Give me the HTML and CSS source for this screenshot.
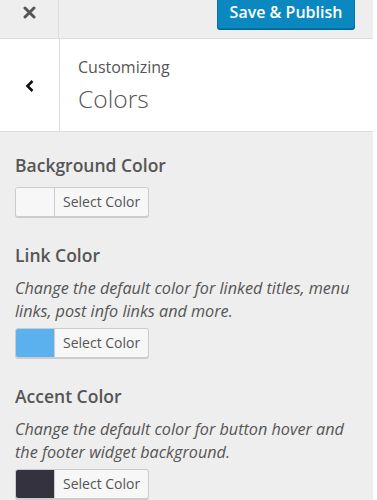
FILE: index.html
```html
<!DOCTYPE html>
<html lang="en">
<head>
    <meta charset="UTF-8">
    <meta name="viewport" content="width=device-width, initial-scale=1.0">
    <title>Customizing Colors</title>
    <link rel="stylesheet" href="styles.css">
</head>
<body>
    <div class="customizer">
        <div class="topbar">
            <div class="close-btn">
                <svg width="13" height="13" viewBox="0 0 13 13"><path d="M2 2 L11 11 M11 2 L2 11" stroke="#555" stroke-width="3" stroke-linecap="round"/></svg>
            </div>
            <button class="publish-btn">Save &amp; Publish</button>
        </div>

        <div class="section-header">
            <div class="back-btn">
                <svg width="10" height="14" viewBox="0 0 10 14"><path d="M7.5 2 L2.5 7 L7.5 12" fill="none" stroke="#111" stroke-width="2.6"/></svg>
            </div>
            <div class="section-title">
                <span class="crumb">Customizing</span>
                <h2>Colors</h2>
            </div>
        </div>

        <div class="controls">
            <div class="control">
                <h3>Background Color</h3>
                <div class="color-picker">
                    <span class="swatch swatch-light"></span>
                    <span class="picker-label">Select Color</span>
                </div>
            </div>

            <div class="control">
                <h3>Link Color</h3>
                <p class="description">Change the default color for linked titles, menu links, post info links and more.</p>
                <div class="color-picker">
                    <span class="swatch swatch-blue"></span>
                    <span class="picker-label">Select Color</span>
                </div>
            </div>

            <div class="control">
                <h3>Accent Color</h3>
                <p class="description">Change the default color for button hover and the footer widget background.</p>
                <div class="color-picker">
                    <span class="swatch swatch-dark"></span>
                    <span class="picker-label">Select Color</span>
                </div>
            </div>
        </div>
    </div>
</body>
</html>
```

FILE: styles.css
```css
body {
    font-family: 'Open Sans', 'Noto Sans', sans-serif;
    background: #fff;
    margin: 0;
    padding: 0;
    color: #555;
}

.customizer {
    width: 373px;
    height: 500px;
    overflow: hidden;
    background: #eee;
}

.topbar {
    display: flex;
    align-items: flex-start;
    height: 38px;
    background: #eee;
    border-bottom: 1px solid #ddd;
}

.close-btn {
    width: 59px;
    height: 38px;
    border-right: 1px solid #ddd;
    display: flex;
    justify-content: center;
    padding-top: 6px;
    box-sizing: border-box;
}

.publish-btn {
    margin-left: auto;
    margin-right: 18px;
    margin-top: -5px;
    width: 138px;
    height: 34px;
    padding: 0;
    background: #0a88bf;
    border: 1px solid #0073aa;
    border-radius: 3px;
    box-shadow: 0 1px 0 #006799;
    color: #fff;
    font-family: 'Open Sans', sans-serif;
    font-size: 16px;
    font-weight: 600;
}

.section-header {
    display: flex;
    height: 92px;
    background: #fff;
    border-bottom: 1px solid #ddd;
}

.back-btn {
    width: 59px;
    border-right: 1px solid #ddd;
    display: flex;
    align-items: center;
    justify-content: center;
    padding-top: 2px;
}

.section-title {
    padding: 17px 0 0 18px;
}

.crumb {
    display: block;
    font-size: 16px;
    line-height: 22px;
}

.section-title h2 {
    margin: 6px 0 0;
    font-size: 24.6px;
    font-weight: 300;
    line-height: 30px;
}

.controls {
    padding: 21px 15px 0;
}

.control {
    margin-bottom: 26px;
}

.control h3 {
    margin: 0 0 10px;
    font-size: 17.5px;
    font-weight: 600;
    line-height: 24px;
}

.description {
    margin: 0 0 5px;
    font-size: 16.2px;
    font-style: italic;
    line-height: 23px;
}

.color-picker {
    display: flex;
    width: max-content;
    height: 30px;
    background: #f7f7f7;
    border: 1px solid #ccc;
    border-radius: 3px;
    box-shadow: 0 1px 0 #ccc;
    box-sizing: border-box;
    overflow: hidden;
}

.swatch {
    width: 38px;
    border-right: 1px solid #ccc;
}

.swatch-light {
    background: #f7f7f7;
}

.swatch-blue {
    background: #5bb0ee;
}

.swatch-dark {
    background: #35323f;
}

.picker-label {
    padding: 0 8px 0 8px;
    font-size: 14px;
    line-height: 28px;
    color: #555;
}
```
